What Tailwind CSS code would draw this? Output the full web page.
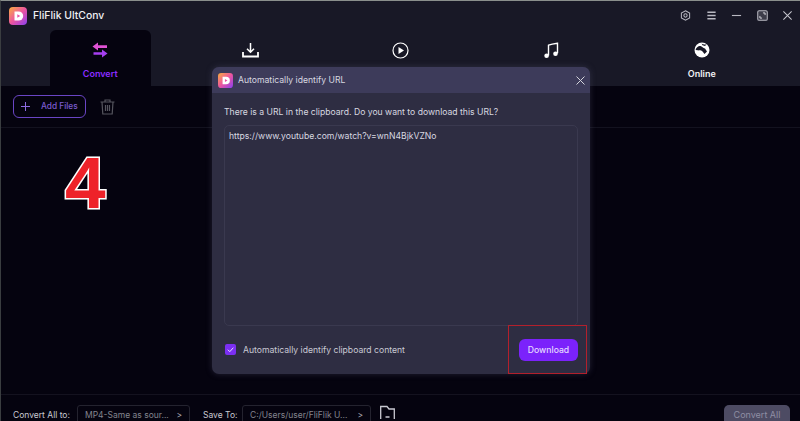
<!DOCTYPE html>
<html lang="en">
<head>
  <meta charset="UTF-8" />
  <title>FliFlik UltConv</title>
  <script src="https://cdn.jsdelivr.net/npm/@tailwindcss/browser@4"></script>
</head>
<body class="w-[800px] h-[421px] overflow-hidden bg-[#05030f] font-['Inter',sans-serif] text-white">
  <div class="relative w-[800px] h-[421px] overflow-hidden flex flex-col border-t border-l border-t-[#8a8f8c] border-l-[#3a3d40]">

    <!-- header and tabs -->
    <div class="h-[85px] shrink-0 bg-[#181826] flex flex-col">
      <div class="h-[29px] shrink-0 flex items-center pl-[8px] pr-[7px]">
        <svg class="w-[18px] h-[18px]" viewBox="0 0 18 18">
          <defs><linearGradient id="logo1" x1="0" y1="0" x2="1" y2="1"><stop offset="0" stop-color="#fbae3c"/><stop offset="0.5" stop-color="#ec55a0"/><stop offset="1" stop-color="#8a3ff0"/></linearGradient></defs>
          <rect width="18" height="18" rx="4" fill="url(#logo1)"/>
          <path d="M5.500 4.500h4.200a4.500 4.500 0 0 1 0 9H5.500z" fill="#fff"/>
          <path d="M8.300 7.200l3 1.800-3 1.800z" fill="#e84fa5"/>
        </svg>
        <span class="ml-[6px] text-[10.4px] font-medium text-[#f0f0f4]">FliFlik UltConv</span>
        <div class="ml-auto flex items-center gap-[14.5px]">
          <svg class="w-[11px] h-[11px]" viewBox="0 0 12 12" fill="none" stroke="#b9b9c2" stroke-width="1.100"><path d="M6 .8l4.500 2.600v5.200L6 11.200 1.500 8.600V3.400z"/><circle cx="6" cy="6" r="1.800"/></svg>
          <svg class="w-[11px] h-[11px]" viewBox="0 0 12 12" stroke="#b9b9c2" stroke-width="1.600"><path d="M1.500 2.500h9M1.500 6h9M1.500 9.500h9"/></svg>
          <svg class="w-[11px] h-[11px]" viewBox="0 0 12 12" stroke="#b9b9c2" stroke-width="1.200"><path d="M1 6h10"/></svg>
          <svg class="w-[11px] h-[11px]" viewBox="0 0 12 12" fill="#3d3d4a" stroke="#b9b9c2" stroke-width="1.100"><rect x=".8" y=".8" width="10.400" height="10.400" rx="1.500"/><path d="M6.500 3.200h2.300v2.300M5.500 8.800H3.200V6.500" fill="none" stroke="#e4e4ea" stroke-width="1"/></svg>
          <svg class="w-[11px] h-[11px]" viewBox="0 0 12 12" stroke="#c6c6ce" stroke-width="1.100"><path d="M1.500 1.500l9 9M10.500 1.500l-9 9"/></svg>
        </div>
      </div>
      <div class="flex-1 grid grid-cols-5 pl-[24px] pr-[23px]">
        <div class="flex justify-center">
          <div class="w-[101px] h-full rounded-t-[6px] bg-[#05030f] flex flex-col items-center pt-[12px]">
            <svg class="w-[16px] h-[16px]" viewBox="0 0 16 16">
              <path d="M6 .5v2.800h9v2.600H6v2.600L.5 4.600z" fill="#e052d4"/>
              <path d="M10 7.500v2.800H1.500v2.400H10v2.800l5.500-4z" fill="#a63ff0"/>
            </svg>
            <span class="mt-[9px] text-[9px] font-semibold text-[#8b2cff]">Convert</span>
          </div>
        </div>
        <div class="flex justify-center pt-[12px]">
          <svg class="w-[17px] h-[17px]" viewBox="0 0 17 17" fill="none" stroke="#fff" stroke-width="1.500"><path d="M8.500 1v9M5 6.800l3.500 3.500L12 6.800"/><path d="M1 10v4.500h15V10" stroke-width="1.800"/></svg>
        </div>
        <div class="flex justify-center pt-[12px]">
          <svg class="w-[17px] h-[17px]" viewBox="0 0 17 17" fill="none"><circle cx="8.500" cy="8.500" r="7.500" stroke="#fff" stroke-width="1.200"/><path d="M6.500 5l5.500 3.500-5.500 3.500z" fill="#fff"/></svg>
        </div>
        <div class="flex justify-center pt-[12px]">
          <svg class="w-[17px] h-[17px]" viewBox="0 0 17 17" fill="none"><path d="M5.500 13.500V3.200c2.500-1 5-1.500 9-2v10" stroke="#fff" stroke-width="1.400"/><circle cx="3.600" cy="13.800" r="2.300" fill="#fff"/><circle cx="12.500" cy="11.800" r="2.300" fill="#fff"/></svg>
        </div>
        <div class="flex flex-col items-center pt-[12px]">
          <svg class="w-[16px] h-[16px]" viewBox="0 0 16 16"><circle cx="8" cy="8" r="7.500" fill="#fff"/><path d="M1.500 7.500C3 5 4.500 3.500 6.500 4c1.500.5 2.500 2 4.500 2.500l2 3-2.500 2.500C9.500 10.500 8.500 9 7 8.500 5 8 3.500 9 1.500 7.500zM7.500 1.500c1.500 1 3 1.200 5 1L11 4 8.500 3.200z" fill="#181826"/></svg>
          <span class="mt-[9px] text-[9px] font-semibold text-[#f0f0f4]">Online</span>
        </div>
      </div>
    </div>

    <!-- toolbar -->
    <div class="h-[42px] shrink-0 flex items-center pl-[12px] border-b border-[#13121f]">
      <div class="w-[73px] h-[23px] rounded-[6px] border border-[#6a45c4] flex items-center pl-[7px]">
        <svg class="w-[9px] h-[9px]" viewBox="0 0 9 9" stroke="#8d6be0" stroke-width="1"><path d="M4.500 0v9M0 4.500h9"/></svg>
        <span class="ml-[11px] text-[8.3px] font-medium text-[#7c5cd0]">Add Files</span>
      </div>
      <svg class="ml-[14px] w-[15px] h-[16px]" viewBox="0 0 15 16" fill="none" stroke="#55555e" stroke-width="1.200"><path d="M.5 3h14M5 3V1h5v2M2 3l.8 12h9.400L13 3M5.500 6v6M7.500 6v6M9.500 6v6"/></svg>
    </div>

    <!-- empty list with the step number -->
    <div class="flex-1 pl-[64px] pt-[13px]">
      <span class="block w-fit text-[73px] leading-[84px] font-bold font-['Liberation_Sans',sans-serif] text-[#ee2229] [-webkit-text-stroke:3px_#fff] [paint-order:stroke_fill]">4</span>
    </div>

    <!-- bottom bar -->
    <div class="h-[27px] shrink-0 border-t border-[#14121f] flex items-start pt-[10px] pl-[12px] pr-[10px] text-[8.5px] text-[#c9c9d2]">
      <span class="mt-[4px] w-[64px]">Convert All to:</span>
      <div class="w-[113px] h-[24px] rounded-[3px] border border-[#24232f] flex items-start justify-between pt-[3px] pl-[7px] pr-[7px] text-[#83838e]"><span>MP4-Same as sour...</span><span class="text-[#b0b0b8]">&gt;</span></div>
      <span class="mt-[4px] ml-[13px] w-[39px]">Save To:</span>
      <div class="w-[129px] h-[24px] rounded-[3px] border border-[#24232f] flex items-start justify-between pt-[3px] pl-[7px] pr-[7px] text-[#83838e]"><span>C:/Users/user/FliFlik U...</span><span class="text-[#b0b0b8]">&gt;</span></div>
      <svg class="ml-[9px] w-[15px] h-[15px]" viewBox="0 0 15 15" fill="none" stroke="#c9c9d2" stroke-width="1.300"><path d="M.7 14V1.500h6.300l2 2.500h5.300V14M5.500 12h4"/></svg>
      <div class="ml-auto w-[66px] h-[24px] rounded-[5px] bg-[#4d4b63] text-center pt-[3px] text-[9px] text-[#8f8ea3]">Convert All</div>
    </div>

    <!-- dialog -->
    <div class="absolute left-[211px] top-[66px] w-[378px] h-[307px] rounded-[7px] bg-[#2e2d42] shadow-[0_0_6px_rgba(90,90,120,0.35)] flex flex-col">
      <div class="h-[26px] shrink-0 rounded-t-[7px] bg-[#3d3b5a] flex items-center pl-[6px] pr-[5px]">
        <svg class="w-[15px] h-[15px]" viewBox="0 0 18 18">
          <defs><linearGradient id="logo2" x1="0" y1="0" x2="1" y2="1"><stop offset="0" stop-color="#fbae3c"/><stop offset="0.5" stop-color="#ec55a0"/><stop offset="1" stop-color="#8a3ff0"/></linearGradient></defs>
          <rect width="18" height="18" rx="4" fill="url(#logo2)"/>
          <path d="M5.500 4.500h4.200a4.500 4.500 0 0 1 0 9H5.500z" fill="#fff"/>
          <path d="M8.300 7.200l3 1.800-3 1.800z" fill="#e84fa5"/>
        </svg>
        <span class="ml-[5px] text-[8.65px] text-[#d8d8e0]">Automatically identify URL</span>
        <svg class="ml-auto w-[9px] h-[9px]" viewBox="0 0 9 9" stroke="#d4d4dc" stroke-width="1"><path d="M.5.5l8 8M8.500.5l-8 8"/></svg>
      </div>
      <div class="flex-1 flex flex-col pl-[12px] pr-[12px]">
        <p class="mt-[13px] text-[8.65px] leading-[12px] text-[#d8d8e0]">There is a URL in the clipboard. Do you want to download this URL?</p>
        <div class="mt-[7px] h-[201px] rounded-[5px] border border-[#3a394f] pt-[4px] pl-[4px] text-[8.65px] leading-[12px] text-[#d8d8e0]">https://www.youtube.com/watch?v=wnN4BjkVZNo</div>
        <div class="flex-1 flex items-center justify-between">
          <div class="flex items-center gap-[7px] pl-[1px]">
            <div class="w-[11px] h-[11px] rounded-[2px] bg-[#7b2ff2] flex items-center justify-center">
              <svg class="w-[7px] h-[7px]" viewBox="0 0 7 7" fill="none" stroke="#e6dcff" stroke-width="1"><path d="M.8 3.700l2 2 3.500-4"/></svg>
            </div>
            <span class="text-[8.65px] text-[#c9c9d4]">Automatically identify clipboard content</span>
          </div>
          <div class="relative w-[59px] h-[22px] rounded-[6px] bg-[#7b22fb] flex items-center justify-center text-[8.65px] font-medium text-[#e4d8ff]">
            Download
            <div class="absolute -left-[11px] -top-[14px] w-[79px] h-[49px] border border-[#b3202c]"></div>
          </div>
        </div>
      </div>
    </div>
  </div>
</body>
</html>
